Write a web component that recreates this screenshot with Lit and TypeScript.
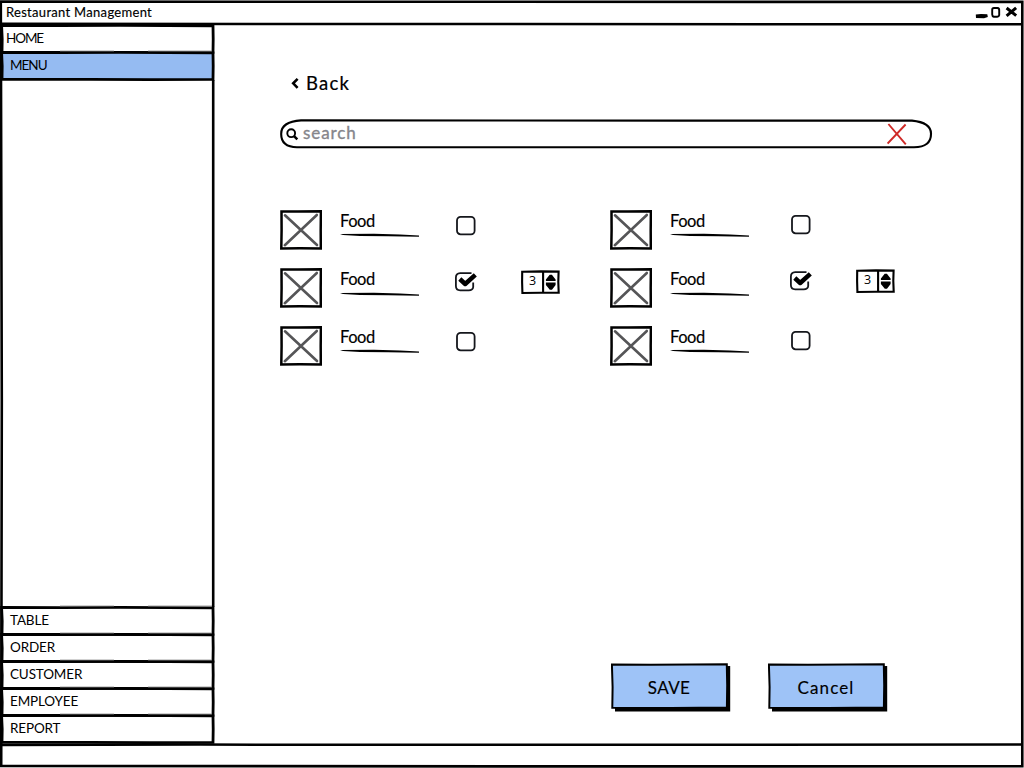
import { LitElement, html, css, svg, nothing } from "lit";
import { customElement, property } from "lit/decorators.js";

@customElement("nav-item")
class NavItem extends LitElement {
  @property() label = "";
  @property({ type: Boolean, reflect: true }) active = false;

  static styles = css`
    :host { display: block; height: 27px; position: relative; }
    .row { display: flex; align-items: center; height: 27px; box-sizing: border-box; padding: 0 0 0 var(--nav-indent, 10px); font-size: 13.5px; line-height: 27px; }
    .fill { background: #95bbf2; margin: 0 2px 0 1px; padding-left: 9px; }
    .text { position: relative; }
    .outline { position: absolute; left: 0; top: -1px; width: 216px; height: 30px; overflow: visible; pointer-events: none; }
    .line { fill: none; stroke: #000; stroke-width: 2.8; }
    .grain { fill: none; stroke: #8c8c8c; stroke-width: 0.8; }
  `;

  render() {
    return html`
      <div class="row ${this.active ? "fill" : ""}"><span class="text">${this.label}</span></div>
      <svg class="outline" viewBox="0 0 216 30">
        <path class="line" d="M1.6 1.5L60 1.7L120 1.4L213 1.9L213.2 15L213 28.4L150 28.7L90 28.3L2 28.3L2.2 15Z" />
        <path class="grain" d="M60 0H114M148 0H212" />
      </svg>
    `;
  }
}

@customElement("food-row")
class FoodRow extends LitElement {
  @property() name = "";
  @property({ type: Boolean }) checked = false;
  @property({ type: Boolean }) shifted = false;
  @property({ type: Number }) quantity = 0;

  static styles = css`
    :host { display: block; height: 58px; }
    .row { display: grid; grid-template-columns: 60px 115px 66px 40px; height: 42px; align-items: start; }
    .row.shifted { grid-template-columns: 60px 120px 66px 40px; }
    .name { display: flex; flex-direction: column; padding-top: 1px; font-size: 16.5px; line-height: 21px; letter-spacing: -0.45px; -webkit-text-stroke: 0.15px #000; }
    .thumb { width: 42px; height: 40px; display: block; }
    .rule { display: block; width: 80px; height: 5px; margin-top: 1px; }
    .low { margin-top: 2px; }
    .check { display: block; width: 24px; height: 26px; margin-top: 3px; }
    .shifted .check { margin-top: 2px; }
    .stepper { display: grid; grid-template-columns: 23px 15px; position: relative; width: 39px; height: 25px; margin-top: 2px; }
    .shifted .stepper { margin-top: 1px; }
    .count { font-family: "Open Sans", sans-serif; font-size: 12.5px; line-height: 22px; text-align: center; }
    .box { position: absolute; inset: 0; width: 39px; height: 25px; }
    .ink { fill: none; stroke: #000; stroke-width: 2.1; }
    .edge { stroke-width: 2.5; }
  `;

  render() {
    return html`
      <div class="row ${this.shifted ? "shifted" : ""}">
        <svg class="thumb" viewBox="0 0 42 40">
          <path class="ink edge" d="M1.5 1.6L18 1.4L40.9 1.3L40.7 20L40.8 38.4L20 38.3L1.3 38.5L1.6 20Z" />
          <path d="M5 5.3L37 35M36.8 5L4.8 35.2" stroke="#555557" stroke-width="2.6" stroke-linecap="round" />
        </svg>
        <div class="name">
          <span>${this.name}</span>
          <svg class="rule ${this.checked ? "low" : ""}" viewBox="0 0 80 5">
            <path d="M0 0.9L34 0.8L60 1.5L79 2.6V3.8L48 3.2L20 2.9L3 2.1Z" />
          </svg>
        </div>
        <svg class="check" viewBox="0 0 24 26">
          ${this.checked
            ? svg`<path d="M16.5 2.1H5.2Q0.9 2.3 0.9 6.5V15Q0.9 19.3 5.2 19.3H13.7Q18 19.3 18.2 16V11.5" fill="none" stroke="#15171c" stroke-width="1.8" />
                <path d="M4.8 8L10.2 13L20.3 3.8" fill="none" stroke="#000" stroke-width="4.5" stroke-linejoin="round" />`
            : svg`<rect x="2" y="3.8" width="17.6" height="17.5" rx="3.6" fill="#fff" stroke="#15171c" stroke-width="1.8" />`}
        </svg>
        ${this.quantity
          ? html`<div class="stepper">
              <span class="count">${this.quantity}</span>
              <svg class="box" viewBox="0 0 39 25">
                <path class="ink" d="M1.2 1.8L20 1.4L37.6 1.6L37.3 12L37.7 22.6L20 22.7L1.4 23L1.1 12ZM22.1 1.5V23" />
                <path d="M24.9 11V9.4L28.7 4.7H30.9L34.6 9.4V11ZM24.9 12.6H34.6V15L31 19.7H28.8L24.9 15Z" />
              </svg>
            </div>`
          : nothing}
      </div>
    `;
  }
}

@customElement("sketch-button")
class SketchButton extends LitElement {
  @property() label = "";

  static styles = css`
    :host { display: block; width: 120px; height: 49px; }
    button { all: unset; position: relative; display: block; width: 120px; height: 49px; }
    .face { position: absolute; inset: 0; width: 120px; height: 49px; }
    .label { position: relative; display: block; width: 116px; text-align: center; font-size: 17px; line-height: 45px; -webkit-text-stroke: 0.15px #000; }
    .wide { letter-spacing: 0.4px; }
    .spaced { letter-spacing: 1.1px; }
  `;

  render() {
    return html`
      <button>
        <svg class="face" viewBox="0 0 120 49">
          <path d="M4 5L119.2 3V48.4H4Z" />
          <path d="M0.9 1.5L40 1.7L80 1.4L115.8 1.3L116.2 22L115.9 44.4L60 45L1.3 44.7L1.6 24Z" fill="#9ec3f7" stroke="#000" stroke-width="2" />
        </svg>
        <span class="label ${this.label === "Cancel" ? "spaced" : "wide"}">${this.label}</span>
      </button>
    `;
  }
}

@customElement("app-root")
class AppRoot extends LitElement {
  static styles = css`
    :host { display: block; width: 1024px; height: 768px; overflow: hidden; background: #fff; color: #000; font-family: Lato, "Open Sans", sans-serif; }
    .window { position: relative; display: grid; grid-template-rows: 25px 718px 25px; width: 1024px; height: 768px; }
    .frame { position: absolute; inset: 0; width: 1024px; height: 768px; pointer-events: none; }
    .frame path { fill: none; stroke: #000; }
    .titlebar { display: flex; justify-content: space-between; padding: 0 5px 0 6px; }
    .title { font-size: 13px; line-height: 25px; letter-spacing: 0.3px; -webkit-text-stroke: 0.15px #000; }
    .controls { width: 46px; height: 25px; }
    .body { display: grid; grid-template-columns: 215px 1fr; }
    .sidebar { display: flex; flex-direction: column; justify-content: space-between; padding-bottom: 1px; letter-spacing: -0.15px; }
    .group { display: flex; flex-direction: column; }
    .first { --nav-indent: 6px; letter-spacing: -1.1px; }
    .tight { letter-spacing: -1px; }
    .content { display: flex; flex-direction: column; padding: 45px 0 0 65px; }
    .back { display: flex; align-items: center; height: 26px; padding-left: 10px; gap: 7px; font-size: 18.5px; line-height: 26px; letter-spacing: 1.2px; -webkit-text-stroke: 0.2px #000; }
    .search { position: relative; display: flex; align-items: center; width: 653px; height: 30px; margin-top: 23px; }
    .pill { position: absolute; inset: 0; width: 653px; height: 30px; }
    .lens { width: 13px; height: 13px; margin-left: 6px; position: relative; }
    .hint { position: relative; flex: 1; margin-left: 4px; font-size: 17px; line-height: 26px; height: 28px; letter-spacing: 0.9px; color: #86868b; -webkit-text-stroke: 0.35px #86868b; }
    .clear { position: relative; width: 20px; height: 22px; margin-right: 26px; }
    .foods { display: grid; grid-template-columns: 330px 330px; margin-top: 61px; }
    .actions { display: flex; gap: 37px; margin-top: 279px; padding-left: 331px; }
  `;

  private rows = [false, true, false];

  render() {
    return html`
      <div class="window">
        <header class="titlebar">
          <span class="title">Restaurant Management</span>
          <svg class="controls" viewBox="0 0 46 25">
            <path d="M2.8 14.6L8 14L14.3 14.2L14.8 17L11 18.2L3 17.9Z" />
            <path d="M21 8H24.5Q26.4 8.2 26.2 10.5V15.2Q26 16.6 24.2 16.7H20.8Q19.2 16.4 19.2 14.6V9.8Q19.2 8.1 21 8Z" fill="none" stroke="#000" stroke-width="1.9" />
            <path d="M33.6 8L43.2 15.7M43.1 7.9L33.6 15.9" stroke="#000" stroke-width="3" />
          </svg>
        </header>
        <div class="body">
          <nav class="sidebar">
            <div class="group">
              <nav-item label="HOME" class="first"></nav-item>
              <nav-item label="MENU" class="tight" active></nav-item>
            </div>
            <div class="group">
              ${["TABLE", "ORDER", "CUSTOMER", "EMPLOYEE", "REPORT"].map(
                (label) => html`<nav-item label=${label}></nav-item>`
              )}
            </div>
          </nav>
          <main class="content">
            <div class="back">
              <svg width="9" height="12" viewBox="0 0 9 12">
                <path d="M7.6 1.8L3.2 6.3L7.6 10.8" fill="none" stroke="#000" stroke-width="2.6" />
              </svg>
              <span>Back</span>
            </div>
            <div class="search">
              <svg class="pill" viewBox="0 0 653 30">
                <path d="M21 1.4L400 1.6L632 1.6Q650.8 3.4 651 14.5Q651.3 28 634 28.3L300 28.3L17 28.3Q1 28 1.2 15Q1 2.7 21 1.4Z" fill="#fff" stroke="#000" stroke-width="2.1" />
              </svg>
              <svg class="lens" viewBox="0 0 13 13">
                <circle cx="5.2" cy="5.2" r="3.9" fill="none" stroke="#000" stroke-width="1.9" />
                <path d="M8.1 8.1L11.3 11.3" stroke="#000" stroke-width="2.5" />
              </svg>
              <span class="hint">search</span>
              <svg class="clear" viewBox="0 0 20 22">
                <path d="M1.4 1L18.8 21.4M18.6 1.5L0.6 20.5" stroke="#cf2a27" stroke-width="1.9" />
              </svg>
            </div>
            <div class="foods">
              ${this.rows.map((on) =>
                [false, true].map(
                  (right) => html`<food-row name="Food" ?checked=${on} ?shifted=${right} quantity=${on ? 3 : 0}></food-row>`
                )
              )}
            </div>
            <div class="actions">
              <sketch-button label="SAVE"></sketch-button>
              <sketch-button label="Cancel"></sketch-button>
            </div>
          </main>
        </div>
        <svg class="frame" viewBox="0 0 1024 768">
          <path stroke-width="2.6" d="M0.8 1.6L400 1.8L1022.3 1.9L1022 300L1022.3 766.3L500 766.4L1.2 765.9L1.8 400Z" />
          <path stroke-width="2.5" d="M1 23.8L500 24L1022 24.3M1 745.1L200 744.6L600 744.8L1022 744.6" />
          <path stroke-width="2.6" d="M213.2 80V607" />
        </svg>
      </div>
    `;
  }
}
